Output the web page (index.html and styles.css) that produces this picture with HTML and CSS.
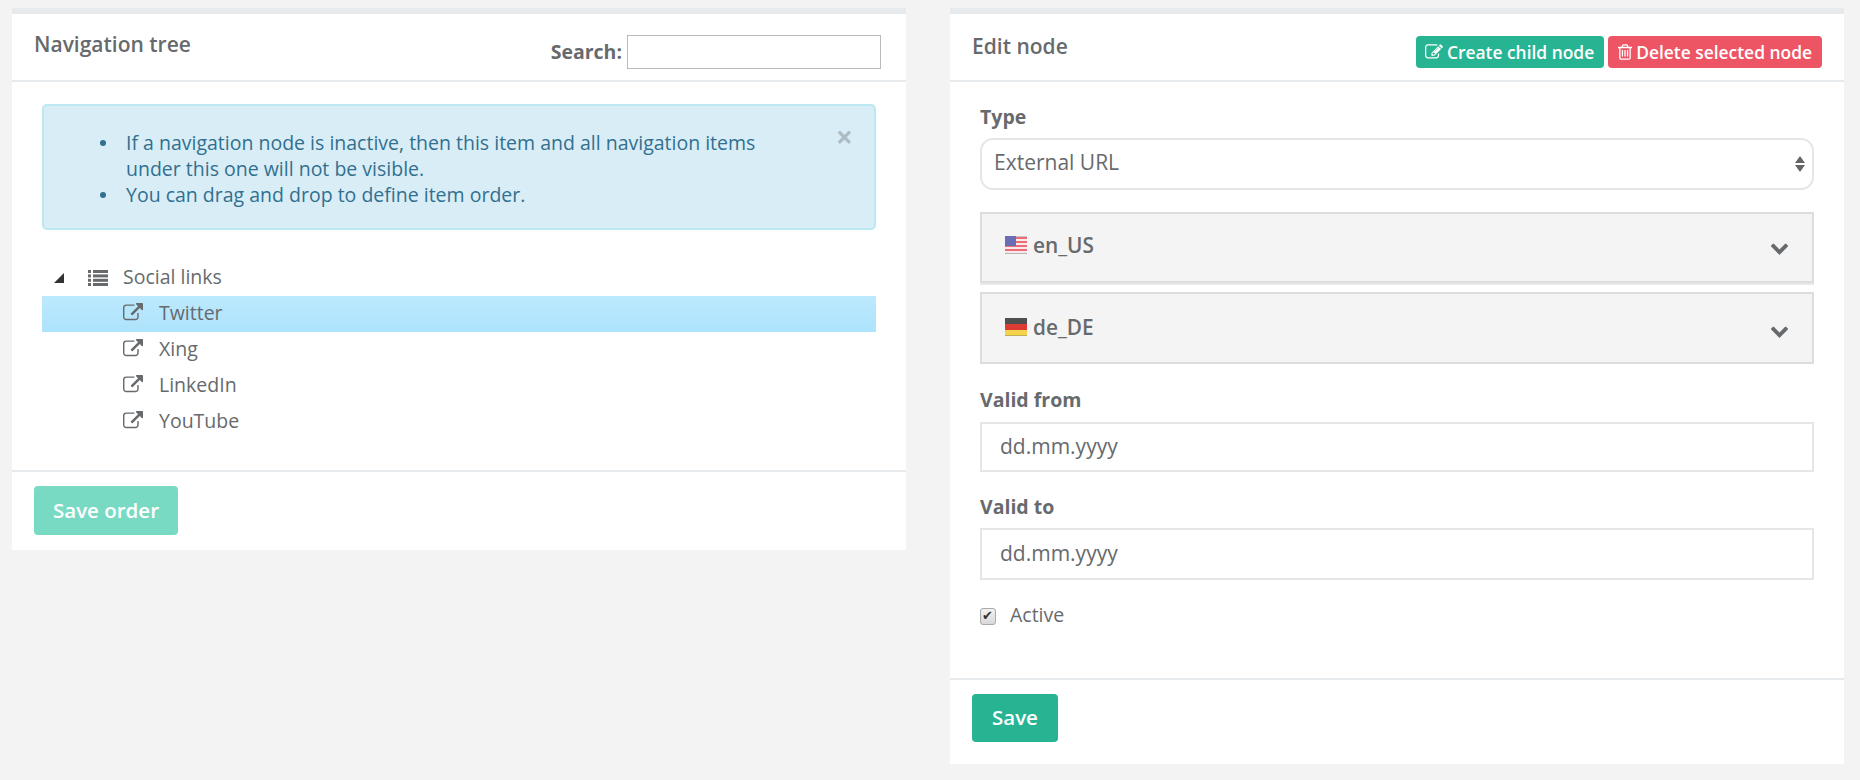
FILE: index.html
```html
<!DOCTYPE html>
<html lang="en">
<head>
    <meta charset="UTF-8">
    <meta name="viewport" content="width=device-width, initial-scale=1.0">
    <title>Navigation</title>
    <link rel="stylesheet" href="styles.css">
</head>
<body>
    <svg class="icon-defs" aria-hidden="true">
        <symbol id="i-external" viewBox="0 0 1792 1792"><path d="M1408 928v320q0 119-84.5 203.5t-203.5 84.5h-832q-119 0-203.5-84.5t-84.5-203.5v-832q0-119 84.5-203.5t203.5-84.5h704q14 0 23 9t9 23v64q0 14-9 23t-23 9h-704q-66 0-113 47t-47 113v832q0 66 47 113t113 47h832q66 0 113-47t47-113v-320q0-14 9-23t23-9h64q14 0 23 9t9 23zm384-864v512q0 26-19 45t-45 19-45-19l-176-176-652 652q-10 10-23 10t-23-10l-114-114q-10-10-10-23t10-23l652-652-176-176q-19-19-19-45t19-45 45-19h512q26 0 45 19t19 45z"/></symbol>
        <symbol id="i-chevron" viewBox="0 0 1792 1792"><path d="M1683 808l-742 741q-19 19-45 19t-45-19l-742-741q-19-19-19-45.5t19-45.5l166-165q19-19 45-19t45 19l531 531 531-531q19-19 45-19t45 19l166 165q19 19 19 45.5t-19 45.5z"/></symbol>
        <symbol id="i-edit" viewBox="0 0 1792 1792"><path d="M888 1184l116-116-152-152-116 116v56h96v96h56zm440-720q-16-16-33 1l-350 350q-17 17-1 33t33-1l350-350q17-17 1-33zm80 594v190q0 119-84.5 203.5t-203.5 84.5h-832q-119 0-203.5-84.5t-84.5-203.5v-832q0-119 84.5-203.5t203.5-84.5h832q63 0 117 25 15 7 18 23 3 17-9 29l-49 49q-14 14-32 8-23-6-45-6h-832q-66 0-113 47t-47 113v832q0 66 47 113t113 47h832q66 0 113-47t47-113v-126q0-13 9-22l64-64q15-15 35-7t20 29zm-96-738l288 288-672 672h-288v-288zm444 132l-92 92-288-288 92-92q28-28 68-28t68 28l152 152q28 28 28 68t-28 68z"/></symbol>
        <symbol id="i-trash" viewBox="0 0 1792 1792"><path d="M704 736v576q0 14-9 23t-23 9h-64q-14 0-23-9t-9-23v-576q0-14 9-23t23-9h64q14 0 23 9t9 23zm256 0v576q0 14-9 23t-23 9h-64q-14 0-23-9t-9-23v-576q0-14 9-23t23-9h64q14 0 23 9t9 23zm256 0v576q0 14-9 23t-23 9h-64q-14 0-23-9t-9-23v-576q0-14 9-23t23-9h64q14 0 23 9t9 23zm128 724v-948h-896v948q0 22 7 40.5t14.5 27 10.5 8.5h832q3 0 10.5-8.5t14.5-27 7-40.5zm-672-1076h448l-48-117q-7-9-17-11h-317q-10 2-17 11zm928 32v64q0 14-9 23t-23 9h-96v948q0 83-47 143.5t-113 60.5h-832q-66 0-113-58.5t-47-141.5v-952h-96q-14 0-23-9t-9-23v-64q0-14 9-23t23-9h309l70-167q15-37 54-63t79-26h320q40 0 79 26t54 63l70 167h309q14 0 23 9t9 23z"/></symbol>
    </svg>

    <div class="columns">
        <section class="panel">
            <div class="panel-header">
                <h2>Navigation tree</h2>
                <div class="search">
                    <label for="search">Search:</label>
                    <input type="text" id="search">
                </div>
            </div>
            <div class="panel-body tree-body">
                <div class="alert">
                    <ul>
                        <li>If a navigation node is inactive, then this item and all navigation items under this one will not be visible.</li>
                        <li>You can drag and drop to define item order.</li>
                    </ul>
                    <span class="alert-close">×</span>
                </div>
                <div class="tree">
                    <div class="tree-row">
                        <span class="tree-arrow"></span>
                        <svg class="tree-list" viewBox="0 0 20 16">
                            <rect x="0" y="0" width="3" height="3"/><rect x="5" y="0" width="15" height="3"/>
                            <rect x="0" y="4.4" width="3" height="3"/><rect x="5" y="4.4" width="15" height="3"/>
                            <rect x="0" y="8.8" width="3" height="3"/><rect x="5" y="8.8" width="15" height="3"/>
                            <rect x="0" y="13" width="3" height="3"/><rect x="5" y="13" width="15" height="3"/>
                        </svg>
                        <span class="tree-text">Social links</span>
                    </div>
                    <div class="tree-row tree-leaf selected"><svg class="leaf-icon"><use href="#i-external"/></svg><span class="tree-text">Twitter</span></div>
                    <div class="tree-row tree-leaf"><svg class="leaf-icon"><use href="#i-external"/></svg><span class="tree-text">Xing</span></div>
                    <div class="tree-row tree-leaf"><svg class="leaf-icon"><use href="#i-external"/></svg><span class="tree-text">LinkedIn</span></div>
                    <div class="tree-row tree-leaf"><svg class="leaf-icon"><use href="#i-external"/></svg><span class="tree-text">YouTube</span></div>
                </div>
            </div>
            <div class="panel-footer">
                <button class="btn btn-muted" type="button">Save order</button>
            </div>
        </section>

        <section class="panel">
            <div class="panel-header">
                <h2 class="edit-title">Edit node</h2>
                <div class="header-actions">
                    <button class="btn-small btn-green" type="button"><svg><use href="#i-edit"/></svg>Create child node</button>
                    <button class="btn-small btn-red" type="button"><svg><use href="#i-trash"/></svg>Delete selected node</button>
                </div>
            </div>
            <form class="panel-body edit-form">
                <label class="field-label type-label" for="type">Type</label>
                <div class="select-wrap">
                    <select id="type">
                        <option>External URL</option>
                    </select>
                    <svg class="select-arrows" viewBox="0 0 10 16"><path d="M5 0l5 7H0zM5 16L0 9h10z"/></svg>
                </div>

                <div class="accordion first">
                    <span class="acc-title">
                        <svg class="flag" viewBox="0 0 22 18">
                            <rect width="22" height="18" rx="1" fill="#ee6b78"/>
                            <rect y="3" width="22" height="2" fill="#f6e9ea"/>
                            <rect y="7" width="22" height="2" fill="#f6e9ea"/>
                            <rect y="11" width="22" height="2" fill="#f6e9ea"/>
                            <rect y="15" width="22" height="2" fill="#f6e9ea"/>
                            <rect y="17" width="22" height="1" fill="#b9b3b6"/>
                            <rect width="22" height="1" fill="#c9c5cc"/>
                            <rect width="11" height="10" fill="#6a6db4"/>
                        </svg>
                        en_US
                    </span>
                    <svg class="chevron"><use href="#i-chevron"/></svg>
                </div>
                <div class="accordion second">
                    <span class="acc-title">
                        <svg class="flag" viewBox="0 0 22 18">
                            <rect width="22" height="6" fill="#4f4f4f"/>
                            <rect y="6" width="22" height="6" fill="#dd3b33"/>
                            <rect y="12" width="22" height="6" fill="#f3d34c"/>
                            <rect y="17" width="22" height="1" fill="#c2ad57"/>
                        </svg>
                        de_DE
                    </span>
                    <svg class="chevron"><use href="#i-chevron"/></svg>
                </div>

                <label class="field-label from-label" for="from">Valid from</label>
                <input class="text-input from-input" type="text" id="from" value="dd.mm.yyyy">
                <label class="field-label to-label" for="to">Valid to</label>
                <input class="text-input to-input" type="text" id="to" value="dd.mm.yyyy">

                <label class="check-row"><input type="checkbox" checked><span class="check-text">Active</span></label>
            </form>
            <div class="panel-footer edit-footer">
                <button class="btn btn-green" type="button">Save</button>
            </div>
        </section>
    </div>
</body>
</html>
```

FILE: styles.css
```css
* {
    box-sizing: border-box;
}

body {
    margin: 0;
    padding: 8px 16px 16px 12px;
    background-color: #f3f3f3;
    color: #676a6c;
    font-family: "Open Sans", sans-serif;
    font-size: 19.5px;
}

.icon-defs {
    display: none;
}

.columns {
    display: grid;
    grid-template-columns: 894px 894px;
    gap: 44px;
    align-items: start;
}

.panel {
    background-color: #fff;
    border-top: 6px solid #e7eaec;
}

.panel-header {
    display: flex;
    justify-content: space-between;
    height: 68px;
    padding: 0 25px 0 22px;
    border-bottom: 2px solid #e7eaec;
}

h2 {
    margin: 0;
    padding-top: 16px;
    font-size: 21px;
    line-height: 28px;
    font-weight: 600;
}

.edit-title {
    padding-top: 18px;
}

.search {
    display: flex;
    align-items: center;
    gap: 5px;
    height: 34px;
    margin-top: 21px;
    font-size: 19.5px;
    font-weight: 700;
}

.search label {
    margin-top: -2px;
}

.search input {
    width: 254px;
    height: 34px;
    border: 1px solid #bbb;
    padding: 0 6px;
}

.header-actions {
    display: flex;
    gap: 4px;
    margin: 22px -3px 0 0;
}

.btn-small {
    display: flex;
    align-items: center;
    height: 32px;
    padding: 0 10px 0 9px;
    border: 0;
    border-radius: 4px;
    color: #fff;
    font-family: inherit;
    font-size: 17.4px;
    font-weight: 600;
}

.btn-small svg {
    width: 18px;
    height: 18px;
    margin-right: 4px;
    fill: #fff;
}

.btn-red svg {
    margin: 0 2px 0 -1px;
}

.btn-green {
    background-color: #27b493;
}

.btn-red {
    background-color: #ed5565;
}

.tree-body {
    padding: 22px 30px 30px;
}

.alert {
    position: relative;
    height: 126px;
    padding: 24px 80px 0 42px;
    background-color: #d9edf7;
    border: 2px solid #bce8f1;
    border-radius: 5px;
    color: #31708f;
    line-height: 26px;
}

.alert ul {
    margin: 0;
    padding-left: 40px;
    list-style: none;
}

.alert li {
    position: relative;
}

.alert li::before {
    content: "";
    position: absolute;
    top: 10px;
    left: -26px;
    width: 6px;
    height: 6px;
    border-radius: 50%;
    background-color: #31708f;
}

.alert-close {
    position: absolute;
    top: 16px;
    right: 21px;
    color: #000;
    opacity: 0.2;
    font-size: 30px;
    line-height: 30px;
    font-weight: 700;
}

.tree {
    margin-top: 30px;
}

.tree-row {
    display: flex;
    align-items: center;
    height: 36px;
    padding-left: 12px;
}

.tree-text {
    margin-top: -3px;
}

.tree-arrow {
    width: 0;
    height: 0;
    margin: 0 24px 0 0;
    border-style: solid;
    border-width: 0 0 10px 10px;
    border-color: transparent transparent #333 transparent;
}

.tree-list {
    width: 20px;
    height: 16px;
    margin-right: 15px;
    fill: #676a6c;
}

.tree-leaf {
    padding-left: 81px;
}

.tree-leaf.selected {
    background: linear-gradient(to bottom, #bde9fd, #ade3fd);
}

.leaf-icon {
    width: 20px;
    height: 20px;
    margin: -2px 16px 0 0;
    fill: #676a6c;
}

.panel-footer {
    padding: 14px 22px 15px;
    border-top: 2px solid #e7eaec;
}

.edit-footer {
    padding-bottom: 22px;
}

.btn {
    display: block;
    border: 0;
    border-radius: 4px;
    color: #fff;
    font-family: inherit;
    font-size: 20.5px;
    font-weight: 600;
    height: 48px;
    padding: 0 20px 2px;
}

.btn-muted {
    background-color: #79dac3;
    height: 49px;
    padding: 0 19px 2px;
}

.edit-form {
    display: block;
    padding: 23px 30px 50px;
}

.field-label {
    display: block;
    font-weight: 700;
    line-height: 24px;
}

.select-wrap {
    position: relative;
    margin-top: 9px;
}

.select-wrap select {
    display: block;
    width: 100%;
    height: 52px;
    padding: 0 12px 4px;
    appearance: none;
    background-color: #fff;
    border: 2px solid #e5e6e7;
    border-radius: 13px;
    color: #676a6c;
    font-family: inherit;
    font-size: 21px;
}

.select-arrows {
    position: absolute;
    top: 18px;
    right: 9px;
    width: 10px;
    height: 16px;
    fill: #666;
}

.accordion {
    display: flex;
    justify-content: space-between;
    align-items: center;
    height: 72px;
    padding: 0 23px;
    background-color: #f4f4f4;
    border: 2px solid #ddd;
}

.accordion.first {
    height: 71px;
    margin: 22px 0 9px;
    box-shadow: 0 2px 0 #e9e9e9;
}

.acc-title {
    display: flex;
    align-items: center;
    font-weight: 600;
    font-size: 20.8px;
}

.first .acc-title {
    margin-bottom: 5px;
}

.second .acc-title {
    margin-bottom: 2px;
}

.second .chevron {
    margin-top: 4px;
}

.flag {
    width: 22px;
    height: 18px;
    margin-right: 6px;
}

.chevron {
    width: 19px;
    height: 19px;
    fill: #676a6c;
}

.from-label {
    margin-top: 24px;
}

.to-label {
    margin-top: 23px;
}

.text-input {
    display: block;
    width: 100%;
    padding: 0 18px 2px;
    margin-top: 10px;
    border: 2px solid #e5e6e7;
    color: #676a6c;
    font-family: inherit;
    font-size: 21px;
}

.from-input {
    height: 50px;
}

.to-input {
    height: 52px;
    margin-top: 9px;
}

.check-row {
    display: flex;
    align-items: center;
    gap: 14px;
    margin-top: 24px;
    height: 24px;
}

.check-text {
    margin-top: -4px;
}

.check-row input {
    appearance: none;
    position: relative;
    width: 16px;
    height: 17px;
    margin: 0;
    border: 1px solid #aaa;
    border-radius: 3px;
    background: linear-gradient(to bottom, #f2f2f2, #d8d8d8);
}

.check-row input::after {
    content: "✔";
    position: absolute;
    top: -2px;
    left: 1px;
    color: #333;
    font-family: "DejaVu Sans", sans-serif;
    font-size: 13px;
    line-height: 18px;
}
```
